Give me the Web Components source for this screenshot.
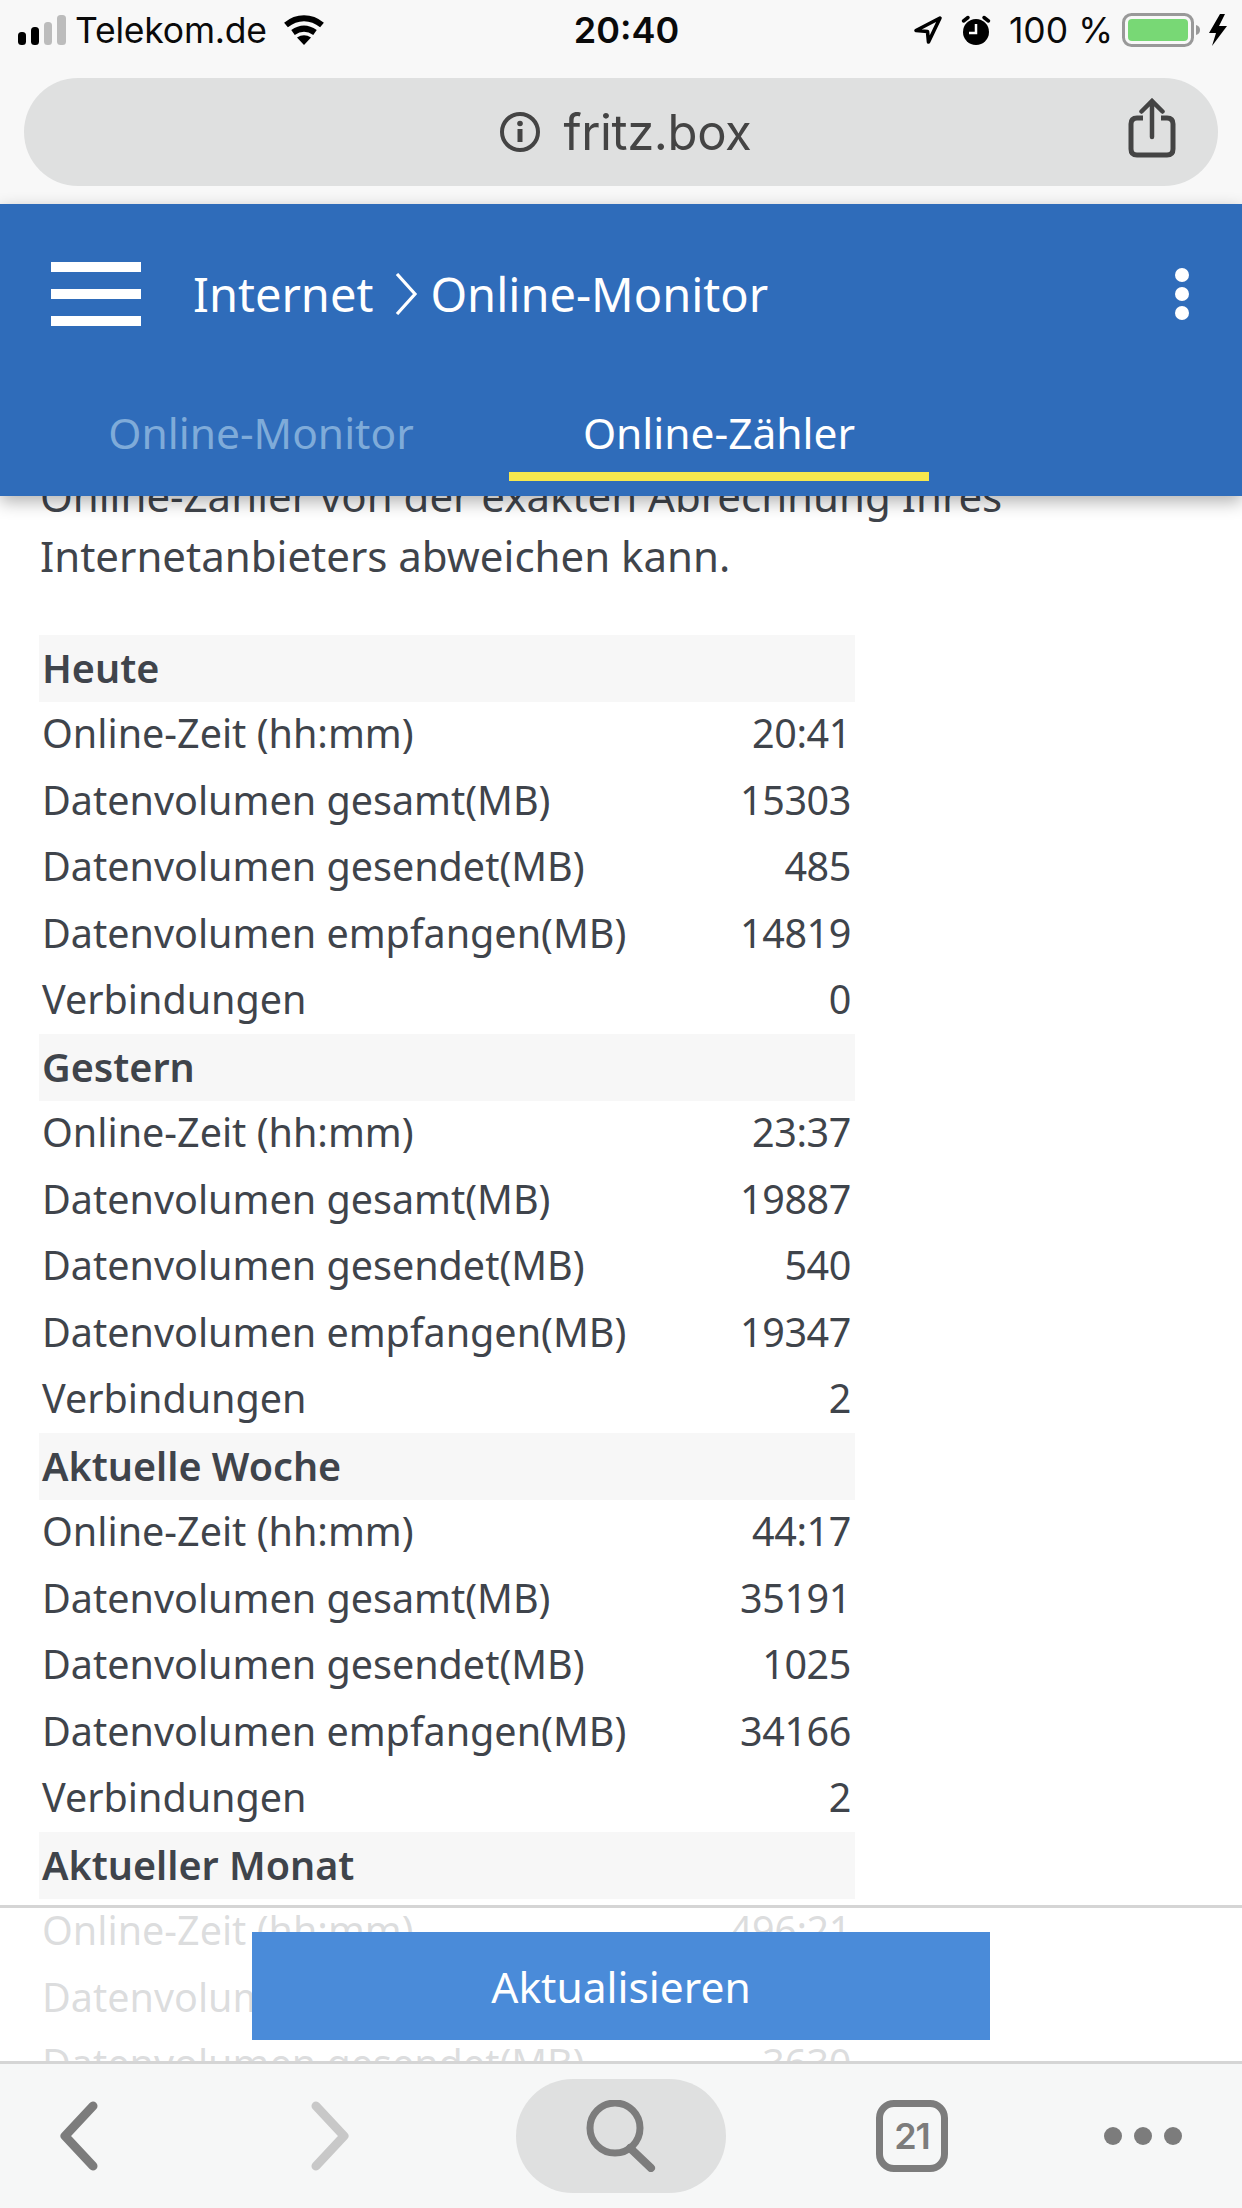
<!DOCTYPE html>
<html lang="de">
  <head>
    <meta charset="UTF-8" />
    <title>Online-Zähler</title>
    <style>
      html,
      body {
        margin: 0;
        padding: 0;
        background: #fff;
      }
    </style>
  </head>
  <body>
    <fritz-app>
      <ios-status slot="status"></ios-status>
      <browser-bar slot="status" host-name="fritz.box"></browser-bar>
      <app-header slot="header"></app-header>

      <p class="intro" slot="content" style="margin:-30px 0 49px 40px;font:42px/60px 'Noto Sans',sans-serif;color:#3f444b">
        Online-Zähler von der exakten Abrechnung Ihres<br />Internetanbieters abweichen kann.
      </p>

      <counter-table slot="content">
        <counter-head>Heute</counter-head>
        <counter-row>Online-Zeit (hh:mm)<span slot="value">20:41</span></counter-row>
        <counter-row>Datenvolumen gesamt(MB)<span slot="value">15303</span></counter-row>
        <counter-row>Datenvolumen gesendet(MB)<span slot="value">485</span></counter-row>
        <counter-row>Datenvolumen empfangen(MB)<span slot="value">14819</span></counter-row>
        <counter-row>Verbindungen<span slot="value">0</span></counter-row>
        <counter-head>Gestern</counter-head>
        <counter-row>Online-Zeit (hh:mm)<span slot="value">23:37</span></counter-row>
        <counter-row>Datenvolumen gesamt(MB)<span slot="value">19887</span></counter-row>
        <counter-row>Datenvolumen gesendet(MB)<span slot="value">540</span></counter-row>
        <counter-row>Datenvolumen empfangen(MB)<span slot="value">19347</span></counter-row>
        <counter-row>Verbindungen<span slot="value">2</span></counter-row>
        <counter-head>Aktuelle Woche</counter-head>
        <counter-row>Online-Zeit (hh:mm)<span slot="value">44:17</span></counter-row>
        <counter-row>Datenvolumen gesamt(MB)<span slot="value">35191</span></counter-row>
        <counter-row>Datenvolumen gesendet(MB)<span slot="value">1025</span></counter-row>
        <counter-row>Datenvolumen empfangen(MB)<span slot="value">34166</span></counter-row>
        <counter-row>Verbindungen<span slot="value">2</span></counter-row>
        <counter-head>Aktueller Monat</counter-head>
        <counter-row>Online-Zeit (hh:mm)<span slot="value">496:21</span></counter-row>
        <counter-row>Datenvolumen gesamt(MB)</counter-row>
        <counter-row>Datenvolumen gesendet(MB)<span slot="value">3630</span></counter-row>
      </counter-table>

      <refresh-bar slot="overlay">Aktualisieren</refresh-bar>
      <browser-toolbar slot="toolbar"></browser-toolbar>
    </fritz-app>

    <template id="fritz-app">
      <style>
        :host {
          display: flex;
          flex-direction: column;
          width: 1242px;
          height: 2208px;
          overflow: hidden;
          background: #fff;
        }
        .chrome {
          display: block;
          height: 204px;
          background: #f8f8f8;
          flex: none;
        }
        .head {
          display: block;
          flex: none;
          position: relative;
          z-index: 2;
        }
        main {
          flex: 1;
          min-height: 0;
          position: relative;
          overflow: hidden;
        }
      </style>
      <div class="chrome"><slot name="status"></slot></div>
      <div class="head"><slot name="header"></slot></div>
      <main>
        <slot name="content"></slot>
        <slot name="overlay"></slot>
      </main>
      <slot name="toolbar"></slot>
    </template>

    <template id="ios-status">
      <style>
        :host {
          display: grid;
          grid-template-columns: 1fr auto 1fr;
          height: 60px;
          align-items: center;
          padding: 0 14px 0 18px;
          box-sizing: border-box;
          font: 35.5px Inter, "Liberation Sans", sans-serif;
          color: #0a0a0a;
        }
        .side {
          display: flex;
          align-items: center;
        }
        .side.right {
          justify-self: end;
        }
        .time {
          font-weight: 600;
          font-size: 36px;
          margin-left: 7px;
        }
        .carrier {
          margin: 0 16px 0 9px;
          letter-spacing: -0.2px;
        }
        svg {
          display: block;
          flex: none;
        }
        .pct {
          margin: 0 9px 0 18px;
        }
      </style>
      <div class="side">
        <svg width="48" height="30" viewBox="0 0 48 30">
          <rect x="0" y="17" width="8" height="13" rx="3.5" fill="#000" />
          <rect x="13" y="12" width="8" height="18" rx="3.5" fill="#000" />
          <rect x="26" y="7" width="8" height="23" rx="3.5" fill="#bcbcbc" />
          <rect x="39" y="0" width="9" height="30" rx="3.5" fill="#bcbcbc" />
        </svg>
        <span class="carrier">Telekom.de</span>
        <svg width="42" height="30" viewBox="0 0 42 30">
          <path d="M3 10C14 1 28 1 39 10" fill="none" stroke="#000" stroke-width="6" />
          <path d="M10 17.5C17 12.5 25 12.5 32 17.5" fill="none" stroke="#000" stroke-width="6" />
          <path d="M14 22.5Q21 18 28 22.5L21 30Z" fill="#000" />
        </svg>
      </div>
      <span class="time">20:40</span>
      <div class="side right">
        <svg width="30" height="30" viewBox="0 0 30 30" style="margin-right: 18px">
          <path d="M27 3L3 15.5L14.5 16.5L15.5 27Z" fill="none" stroke="#000" stroke-width="3.6" stroke-linejoin="round" />
        </svg>
        <svg width="30" height="30" viewBox="0 0 30 30">
          <circle cx="15" cy="17" r="13" fill="#000" />
          <path d="M15 9V18H8" fill="none" stroke="#fff" stroke-width="2.5" />
          <path d="M2.5 6L7 2.5M27.5 6L23 2.5" stroke="#000" stroke-width="3.5" stroke-linecap="round" />
        </svg>
        <span class="pct">100 %</span>
        <svg width="106" height="34" viewBox="0 0 106 34">
          <rect x="1.5" y="1.5" width="69" height="31" rx="8" fill="none" stroke="#999" stroke-width="3" />
          <rect x="6" y="6" width="60" height="22" rx="4" fill="#78d875" />
          <path d="M74 12Q78 13 78 17Q78 21 74 22Z" fill="#999" />
          <path d="M98 1L87 20H94L90 33L105 13H97L103 1Z" fill="#000" />
        </svg>
      </div>
    </template>

    <template id="browser-bar">
      <style>
        :host {
          display: flex;
          align-items: center;
          justify-content: center;
          position: relative;
          height: 108px;
          margin: 18px 24px 0;
          padding-left: 8px;
          border-radius: 54px;
          background: #dfe0e0;
          color: #444;
          font: 49px Inter, "Liberation Sans", sans-serif;
        }
        .host {
          margin-left: 23px;
          letter-spacing: -0.4px;
        }
        svg {
          display: block;
        }
        .share {
          position: absolute;
          right: 42px;
          top: 20px;
        }
      </style>
      <svg width="42" height="42" viewBox="0 0 42 42">
        <circle cx="21" cy="21" r="18" fill="none" stroke="#444" stroke-width="4" />
        <circle cx="21" cy="12.5" r="2.8" fill="#444" />
        <path d="M21 18V31" stroke="#444" stroke-width="5" />
      </svg>
      <span class="host"></span>
      <svg class="share" width="48" height="60" viewBox="0 0 48 60">
        <path d="M15 20H9Q3 20 3 26V51Q3 57 9 57H39Q45 57 45 51V26Q45 20 39 20H33" fill="none" stroke="#444" stroke-width="5" />
        <path d="M24 3V39M13.5 13.5L24 3L34.5 13.5" fill="none" stroke="#444" stroke-width="4.5" stroke-linecap="round" />
      </svg>
    </template>

    <template id="app-header">
      <style>
        :host {
          display: block;
          height: 292px;
          background: #2f6cba;
          box-shadow: 0 6px 16px rgba(0, 0, 0, 0.3);
          color: #fff;
          font-family: "Noto Sans", sans-serif;
        }
        .top {
          display: flex;
          align-items: center;
          height: 180px;
          padding-left: 51px;
          padding-right: 53px;
        }
        .burger {
          display: flex;
          flex-direction: column;
          gap: 17px;
          width: 90px;
          margin-right: 52px;
        }
        .burger i {
          display: block;
          height: 10px;
          background: #fff;
        }
        .title {
          flex: 1;
          display: flex;
          align-items: center;
          font-size: 47px;
          line-height: 56px;
        }
        .title svg {
          margin: 0 12px 0 21px;
        }
        .more {
          display: flex;
          flex-direction: column;
          gap: 5px;
        }
        .more i {
          display: block;
          width: 14px;
          height: 14px;
          border-radius: 50%;
          background: #fff;
        }
        .tabs {
          display: flex;
          gap: 38px;
          padding-left: 51px;
          height: 106px;
        }
        .tab {
          width: 420px;
          height: 97px;
          box-sizing: border-box;
          padding-top: 22px;
          text-align: center;
          font-size: 42.5px;
          line-height: 54px;
          color: #7fabd9;
        }
        .tab.on {
          color: #fff;
          border-bottom: 9px solid #f7e84e;
        }
      </style>
      <div class="top">
        <div class="burger"><i></i><i></i><i></i></div>
        <div class="title">
          <span>Internet</span>
          <svg width="24" height="42" viewBox="0 0 24 42">
            <path d="M3 1L21 21L3 41" fill="none" stroke="#fff" stroke-width="3.2" />
          </svg>
          <span>Online-Monitor</span>
        </div>
        <div class="more"><i></i><i></i><i></i></div>
      </div>
      <div class="tabs">
        <div class="tab">Online-Monitor</div>
        <div class="tab on">Online-Zähler</div>
      </div>
    </template>

    <template id="counter-table">
      <style>
        :host {
          display: flex;
          flex-direction: column;
          width: 816px;
          margin-left: 39px;
          font: 39.5px "Noto Sans", sans-serif;
          color: #3f444b;
        }
      </style>
      <slot></slot>
    </template>

    <template id="counter-head">
      <style>
        :host {
          display: flex;
          align-items: center;
          height: 66.5px;
          padding-left: 3px;
          background: #f7f7f7;
          font-weight: 600;
        }
      </style>
      <slot></slot>
    </template>

    <template id="counter-row">
      <style>
        :host {
          display: flex;
          align-items: center;
          justify-content: space-between;
          height: 66.5px;
          box-sizing: border-box;
          padding: 0 4px 3px 3px;
        }
        .value {
          letter-spacing: -0.4px;
        }
      </style>
      <span><slot></slot></span>
      <span class="value"><slot name="value"></slot></span>
    </template>

    <template id="refresh-bar">
      <style>
        :host {
          position: absolute;
          left: 0;
          right: 0;
          bottom: 0;
          height: 156px;
          box-sizing: border-box;
          border-top: 3px solid #d5d5d5;
          background: rgba(255, 255, 255, 0.82);
          padding-top: 24px;
          display: flex;
          justify-content: center;
          align-items: flex-start;
        }
        button {
          width: 738px;
          height: 108px;
          border: 0;
          padding: 0;
          background: #4a8bd9;
          color: #fff;
          font: 42.5px "Noto Sans", sans-serif;
        }
      </style>
      <button><slot></slot></button>
    </template>

    <template id="browser-toolbar">
      <style>
        :host {
          display: flex;
          align-items: center;
          flex: none;
          height: 147px;
          box-sizing: border-box;
          border-top: 3px solid #d5d5d5;
          background: #f6f7f7;
          padding-left: 60px;
        }
        svg {
          display: block;
          flex: none;
        }
        .forward {
          margin-left: 213px;
        }
        .pill {
          display: flex;
          align-items: center;
          justify-content: center;
          flex: none;
          width: 210px;
          height: 114px;
          margin-left: 167px;
          border-radius: 57px;
          background: #dfe0e0;
        }
        .tabs {
          flex: none;
          width: 72px;
          height: 72px;
          margin-left: 150px;
          box-sizing: border-box;
          border: 7px solid #7c7c7c;
          border-radius: 18px;
          display: flex;
          align-items: center;
          justify-content: center;
          font: 600 36px Inter, "Liberation Sans", sans-serif;
          letter-spacing: -1px;
          color: #7c7c7c;
        }
        .dots {
          display: flex;
          gap: 12px;
          margin-left: 156px;
        }
        .dots i {
          display: block;
          width: 18px;
          height: 18px;
          border-radius: 50%;
          background: #7c7c7c;
        }
      </style>
      <svg width="38" height="70" viewBox="0 0 38 70">
        <path d="M33 5L5 35L33 65" fill="none" stroke="#7c7c7c" stroke-width="9" stroke-linecap="round" stroke-linejoin="round" />
      </svg>
      <svg class="forward" width="38" height="70" viewBox="0 0 38 70">
        <path d="M5 5L33 35L5 65" fill="none" stroke="#c8c8c8" stroke-width="9" stroke-linecap="round" stroke-linejoin="round" />
      </svg>
      <div class="pill">
        <svg width="70" height="72" viewBox="0 0 70 72">
          <circle cx="29" cy="28" r="25" fill="none" stroke="#7c7c7c" stroke-width="7" />
          <path d="M44 48L65 68" stroke="#7c7c7c" stroke-width="8" stroke-linecap="round" />
        </svg>
      </div>
      <div class="tabs">21</div>
      <div class="dots"><i></i><i></i><i></i></div>
    </template>

    <script>
      class ShadowEl extends HTMLElement {
        constructor() {
          super();
          const template = document
            .getElementById(this.localName)
            .content.cloneNode(true);
          this.attachShadow({ mode: "open" }).appendChild(template);
        }
      }

      class BrowserBar extends ShadowEl {
        connectedCallback() {
          this.shadowRoot.querySelector(".host").textContent =
            this.getAttribute("host-name");
        }
      }

      customElements.define("fritz-app", class extends ShadowEl {});
      customElements.define("ios-status", class extends ShadowEl {});
      customElements.define("browser-bar", BrowserBar);
      customElements.define("app-header", class extends ShadowEl {});
      customElements.define("counter-table", class extends ShadowEl {});
      customElements.define("counter-head", class extends ShadowEl {});
      customElements.define("counter-row", class extends ShadowEl {});
      customElements.define("refresh-bar", class extends ShadowEl {});
      customElements.define("browser-toolbar", class extends ShadowEl {});
    </script>
  </body>
</html>
